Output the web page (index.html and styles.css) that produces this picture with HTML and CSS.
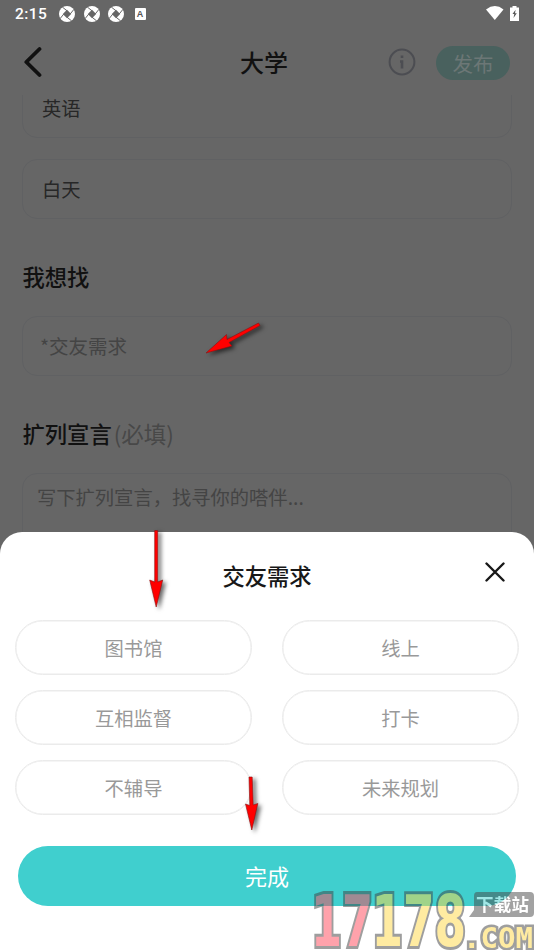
FILE: index.html
```html
<!DOCTYPE html>
<html lang="zh-CN">
<head>
<meta charset="utf-8">
<title>大学</title>
<link rel="stylesheet" href="styles.css">
</head>
<body>
<div class="screen">
  <div class="page">
    <div class="status">
      <span class="time">2:15</span>
      <svg class="round" viewBox="0 0 16 16"><use href="#shutter"/></svg>
      <svg class="round" viewBox="0 0 16 16"><use href="#shutter"/></svg>
      <svg class="round" viewBox="0 0 16 16"><use href="#shutter"/></svg>
      <span class="abox">A</span>
      <svg class="wifi" viewBox="0 0 18 14"><path d="M0 3.400Q9-3.400 17.500 3.400L8.800 14Z" fill="#fff"/></svg>
      <svg class="battery" viewBox="0 0 9 15"><path d="M2.500 0h4v1.600H9V15H0V1.600h2.500z" fill="#fff"/><path d="M5.600 3.800 2.500 8h1.800l-.8 4 3.300-4.800H5z" fill="#555"/></svg>
    </div>
    <header class="nav">
      <svg class="back" viewBox="0 0 20 32"><path d="M17.500 3 4.300 16l13.200 13" fill="none" stroke="#111" stroke-width="3.800" stroke-linecap="round" stroke-linejoin="round"/></svg>
      <h1>大学</h1>
      <svg class="info" viewBox="0 0 28 28"><circle cx="14" cy="14" r="12.400" fill="none" stroke="#4c4d52" stroke-width="2"/><path d="M14 7.500v2.600M12 13.500h2v7" fill="none" stroke="#4c4d52" stroke-width="2.600"/></svg>
      <button class="publish">发布</button>
    </header>
    <main class="form">
      <div class="field cut">英语</div>
      <div class="field day">白天</div>
      <h2>我想找</h2>
      <div class="field hint">*交友需求</div>
      <h2>扩列宣言<span>(必填)</span></h2>
      <div class="field area">写下扩列宣言，找寻你的嗒伴...</div>
    </main>
  </div>
  <section class="sheet">
    <div class="sheet-head">
      <h3>交友需求</h3>
      <svg class="close" viewBox="0 0 20 20"><path d="m1.500 1.500 17 17m0-17-17 17" stroke="#181818" stroke-width="2.400" stroke-linecap="round"/></svg>
    </div>
    <div class="options">
      <button>图书馆</button><button>线上</button>
      <button>互相监督</button><button>打卡</button>
      <button>不辅导</button><button>未来规划</button>
    </div>
    <button class="done">完成</button>
  </section>
  <svg class="marks" viewBox="0 0 534 950">
    <defs>
      <g id="shutter"><circle cx="8" cy="8" r="8" fill="#fff"/><path d="M8 3.800 12.200 8 8 12.200 3.800 8z" fill="#666"/><path d="M8 4.800 3.500 1.200M11.200 8 14.800 3.500M8 11.200 12.500 14.800M4.800 8 1.200 12.500" stroke="#666" stroke-width="1"/></g>
    </defs>
    <g class="arrows">
      <path d="M258.500 323 260 325.500 229 342.500 232 346 206 353 226.500 334.500 227 339.500Z"/>
      <path d="M154.700 530.500h3v51.500l5-2-6.500 27-6.500-27 5 2Z"/>
      <path d="M249 777h3.200l1 28 4.600-1.500-6 26.500-6.300-26 4.300 1.500Z"/>
    </g>
    <g class="logo">
      <text transform="translate(311 946) scale(.62 1)" class="digits pink">17</text>
      <text transform="translate(371.500 946) scale(.63 1)" class="digits">178</text>
      <text x="463" y="947.500" class="com" textLength="70" lengthAdjust="spacingAndGlyphs">.COM</text>
      <path d="M477 892h53q4 0 4 4v17q0 4-4 4h-61l5-7v-14q0-4 3-4Z" fill="#484848"/>
      <text x="476" y="911" class="badge" textLength="53">下载站</text>
    </g>
  </svg>
</div>
</body>
</html>
```
FILE: styles.css
```css
* { box-sizing: border-box; }
body { margin: 0; background: #666; font-family: "Noto Sans CJK SC", sans-serif; }
button { font: inherit; border: 0; padding: 0; }
.screen { position: relative; width: 534px; height: 950px; overflow: hidden; display: flex; flex-direction: column; }
.page { height: 532px; overflow: hidden; display: flex; flex-direction: column; }
.status { flex: none; height: 28px; display: flex; align-items: center; padding: 0 15px; }
.time { width: 44px; font: 500 15.500px/28px Roboto, sans-serif; letter-spacing: .4px; color: #fff; }
.round { width: 16px; height: 16px; margin: -1px 8.500px 0 0; }
.abox { width: 11px; height: 12px; margin-left: 2px; background: #fff; border-radius: 1px; color: #555; font: bold 9px/12px "Liberation Sans", sans-serif; text-align: center; }
.wifi { width: 18px; height: 14px; margin: -2px 6px 0 auto; }
.battery { width: 9px; height: 15px; margin-top: -2px; }
.nav { flex: none; height: 67px; display: flex; align-items: center; padding: 0 24px 0 22px; }
.back { width: 20px; height: 32px; }
h1 { margin: 0 auto 0 198px; font-size: 24px; line-height: 36px; font-weight: 500; color: #111; }
.info { width: 28px; height: 28px; margin-right: 20px; }
.publish { width: 74px; height: 34px; margin-top: 2px; border-radius: 17px; background: #49615e; color: #6c7776; font-size: 20.500px; line-height: 32px; }
.form { flex: 1; min-height: 0; overflow: hidden; padding: 0 22px; }
.field { height: 60px; border: 1px solid #606163; border-radius: 15px; padding: 0 19px; font-size: 19.300px; line-height: 58px; color: #272727; }
.cut { margin-top: -17px; }
.day { margin-top: 21px; }
h2 { margin: 39px 0 22px .5px; height: 36px; font-size: 22.300px; line-height: 36px; font-weight: 500; color: #111; }
h2 span { margin-left: 2px; font-size: 22.500px; font-weight: 400; color: #484848; }
.hint { padding-left: 17px; font-size: 19.500px; color: #444; }
.area { height: 120px; padding-left: 14px; line-height: 46px; color: #444; }
.sheet { flex: 1; border-radius: 22px 22px 0 0; background: #fff; padding: 0 15px; }
.sheet-head { height: 88px; display: grid; grid-template-columns: 1fr auto 1fr; align-items: center; }
h3 { grid-column: 2; margin: -2px 0 0; font-size: 22.300px; line-height: 34px; font-weight: 500; color: #181818; }
.close { justify-self: end; width: 20px; height: 20px; margin: -9px 14px 0 0; }
.options { display: grid; grid-template-columns: 1fr 1fr; gap: 15px 30px; }
.options button { height: 55px; border: 1px solid #ebebeb; border-radius: 28px; background: #fff; box-shadow: inset 0 0 0 .5px #ebebeb; color: #999; font-size: 19.300px; line-height: 53px; padding-top: 1px; }
.done { display: block; width: 498px; height: 60px; margin: 31px 0 0 3px; border-radius: 30px; background: #40cfce; color: #fff; font-size: 22px; line-height: 58px; padding-bottom: 2px; }
.marks { position: absolute; inset: 0; width: 534px; height: 950px; pointer-events: none; }
.arrows { fill: #f00; stroke: #811; stroke-width: .6px; filter: drop-shadow(3px 2px 2px rgba(0, 0, 0, .6)); }
.logo { opacity: .5; }
.digits { font: bold 72px "DejaVu Sans", sans-serif; fill: #ffd846; stroke: #404040; stroke-width: 6px; paint-order: stroke; }
.pink { fill: #ff475a; }
.com { font: bold 29px "DejaVu Sans Mono", monospace; fill: #ffd846; stroke: #404040; stroke-width: 5px; paint-order: stroke; }
.badge { font: bold 17.500px "Noto Sans CJK SC", sans-serif; fill: #fff; }
```
